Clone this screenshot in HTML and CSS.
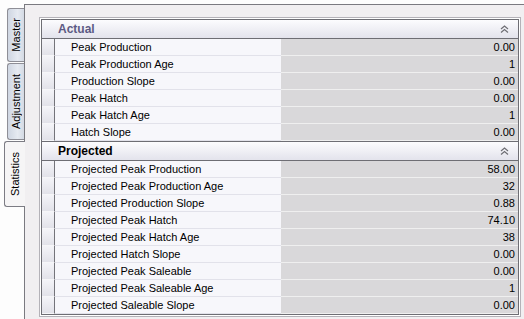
FILE: index.html
```html
<!DOCTYPE html>
<html lang="en">
<head>
    <meta charset="UTF-8">
    <title>Statistics</title>
    <link rel="stylesheet" href="styles.css">
</head>
<body>
    <div class="tab-strip">
        <div class="tab tab-master"><span>Master</span></div>
        <div class="tab tab-adjust"><span>Adjustment</span></div>
        <div class="tab tab-stats selected"><span>Statistics</span></div>
    </div>
    <div class="panel">
        <div class="grid-frame">
            <div class="grid">
                <div class="section-head muted">
                    <span class="section-title">Actual</span>
                    <svg class="chev" width="9" height="8" viewBox="0 0 9 8"><path d="M1 4 L4.5 1 L8 4 M1 7.5 L4.5 4.5 L8 7.5" fill="none" stroke="#6e6e74" stroke-width="1.2"/></svg>
                </div>
                <div class="row"><div class="rh"></div><div class="lbl">Peak Production</div><div class="val">0.00</div></div>
                <div class="row"><div class="rh"></div><div class="lbl">Peak Production Age</div><div class="val">1</div></div>
                <div class="row"><div class="rh"></div><div class="lbl">Production Slope</div><div class="val">0.00</div></div>
                <div class="row"><div class="rh"></div><div class="lbl">Peak Hatch</div><div class="val">0.00</div></div>
                <div class="row"><div class="rh"></div><div class="lbl">Peak Hatch Age</div><div class="val">1</div></div>
                <div class="row"><div class="rh"></div><div class="lbl">Hatch Slope</div><div class="val">0.00</div></div>

                <div class="section-head">
                    <span class="section-title">Projected</span>
                    <svg class="chev" width="9" height="8" viewBox="0 0 9 8"><path d="M1 4 L4.5 1 L8 4 M1 7.5 L4.5 4.5 L8 7.5" fill="none" stroke="#6e6e74" stroke-width="1.2"/></svg>
                </div>
                <div class="row"><div class="rh"></div><div class="lbl">Projected Peak Production</div><div class="val">58.00</div></div>
                <div class="row"><div class="rh"></div><div class="lbl">Projected Peak Production Age</div><div class="val">32</div></div>
                <div class="row"><div class="rh"></div><div class="lbl">Projected Production Slope</div><div class="val">0.88</div></div>
                <div class="row"><div class="rh"></div><div class="lbl">Projected Peak Hatch</div><div class="val">74.10</div></div>
                <div class="row"><div class="rh"></div><div class="lbl">Projected Peak Hatch Age</div><div class="val">38</div></div>
                <div class="row"><div class="rh"></div><div class="lbl">Projected Hatch Slope</div><div class="val">0.00</div></div>
                <div class="row"><div class="rh"></div><div class="lbl">Projected Peak Saleable</div><div class="val">0.00</div></div>
                <div class="row"><div class="rh"></div><div class="lbl">Projected Peak Saleable Age</div><div class="val">1</div></div>
                <div class="row"><div class="rh"></div><div class="lbl">Projected Saleable Slope</div><div class="val">0.00</div></div>
            </div>
        </div>
    </div>
</body>
</html>
```

FILE: styles.css
```css
body, html {
    margin: 0;
    padding: 0;
    height: 100%;
    font-family: "Liberation Sans", Arial, sans-serif;
    font-size: 11px;
    background-color: #fdfdfd;
    overflow: hidden;
}
body {
    display: flex;
}

/* vertical tabs on the left */
.tab-strip {
    width: 24px;
    flex: none;
    display: flex;
    flex-direction: column;
    align-items: flex-end;
    padding-top: 8px;
    box-sizing: border-box;
}
.tab {
    width: 17px;
    border: 1px solid #8e8e96;
    border-right: none;
    border-radius: 3px 0 0 3px;
    background: linear-gradient(to right, #cfd6e2, #e6eaf1 60%, #d4dae4);
    display: flex;
    align-items: center;
    justify-content: center;
    margin-bottom: 1px;
    box-sizing: border-box;
}
.tab span {
    writing-mode: vertical-rl;
    transform: rotate(180deg);
    color: #000;
    line-height: 15px;
}
.tab-master { height: 54px; }
.tab-adjust { height: 77px; }
.tab-stats {
    height: 66px;
    width: 21px;
    margin-right: -1px;
    position: relative;
    z-index: 1;
    background: #f6f5f6;
    border-color: #7c7c84;
}

/* page panel */
.panel {
    flex: 1;
    margin-top: 4px;
    border-top: 1px solid #7a7a80;
    border-left: 1px solid #7a7a80;
    background-color: #f1eff1;
    padding: 12px 3px 0 14px;
}
.grid-frame {
    border: 1px solid #b4b2b8;
    background-color: #ffffff;
    padding: 1px;
}
.grid {
    border: 1px solid #6e6e74;
    border-top: none;
}

.section-head {
    height: 18px;
    border-top: 1px solid #6e6e74;
    border-bottom: 1px solid #6e6e74;
    background: linear-gradient(to bottom, #fcfcfe, #e3e3ec);
    display: flex;
    align-items: center;
    justify-content: space-between;
    padding: 0 9px 0 16px;
}
.section-title {
    font-size: 12px;
    font-weight: bold;
    color: #000;
}
.section-head.muted .section-title {
    color: #5c5a84;
}

.row {
    display: flex;
    height: 17px;
}
.rh {
    width: 13px;
    flex: none;
    background: linear-gradient(to bottom, #f4f4f8, #e2e2e9);
    border-right: 1px solid #74747a;
    border-bottom: 1px solid #f6f6f8;
    box-sizing: border-box;
}
.lbl {
    width: 226px;
    flex: none;
    background-color: #f7f7fb;
    border-bottom: 1px solid #e2e2ea;
    box-sizing: border-box;
    padding-left: 16px;
    line-height: 16px;
    color: #000;
}
.val {
    flex: 1;
    background-color: #d9d8da;
    border-bottom: 1px solid #efefef;
    box-sizing: border-box;
    text-align: right;
    padding-right: 3px;
    line-height: 16px;
    color: #000;
}
```
